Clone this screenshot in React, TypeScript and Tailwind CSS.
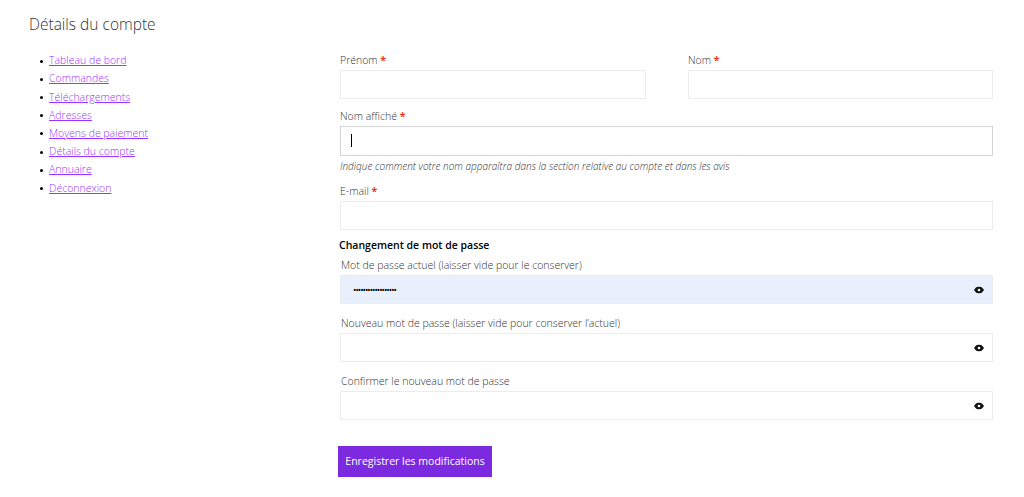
import React from "react";

const Eye = () => (
  <svg width="10" height="7" viewBox="0 0 10 7" className="absolute right-[8px] top-1/2 -translate-y-1/2">
    <path d="M0 3.5C1.5 1 3.2 0 5 0s3.5 1 5 3.5C8.5 6 6.8 7 5 7S1.5 6 0 3.5z" fill="#111" />
    <circle cx="5" cy="3.5" r="1.3" fill="#fff" />
  </svg>
);

const Star = () => <span className="text-[#e2401c] font-bold"> *</span>;

const PwField = ({ label, value, filled }: { label: string; value?: string; filled?: boolean }) => (
  <div>
    <div className="text-[10.5px] text-[#333] font-light h-[20px] leading-[20px] pl-[1px]">{label}</div>
    <div className={`relative h-[29px] border border-[#ececec] mt-[0px] ${filled ? "bg-[#e8f0fe]" : "bg-white"}`}>
      {value && <span className="absolute left-[12px] top-[7px] text-[9px] tracking-[-1px] text-black">{value}</span>}
      <Eye />
    </div>
  </div>
);

export default function App() {
  const links = ["Tableau de bord", "Commandes", "Téléchargements", "Adresses", "Moyens de paiement", "Détails du compte", "Annuaire", "Déconnexion"];
  return (
    <div className="w-[1024px] h-[497px] bg-white text-[#333] overflow-hidden" style={{ fontFamily: '"Open Sans", sans-serif' }}>
      <h1 className="pl-[29px] pt-[13px] text-[15.5px] font-light text-[#333] leading-[22px]">Détails du compte</h1>
      <div className="flex">
        <ul className="w-[340px] pl-[40px] pt-[17px] list-none">
          {links.map((l) => (
            <li key={l} className="flex items-center h-[18.2px] text-[10.5px]">
              <span className="w-[3px] h-[3px] rounded-full bg-black mr-[6px]"></span>
              <a className="underline text-[#a033ff] font-light">{l}</a>
            </li>
          ))}
        </ul>
        <div className="w-[653px] pt-[15px]">
          <div className="flex justify-between">
            <div className="w-[306px]">
              <div className="text-[10.5px] font-light h-[20px] leading-[20px]">Prénom<Star /></div>
              <div className="h-[29px] border border-[#ececec]"></div>
            </div>
            <div className="w-[305px]">
              <div className="text-[10.5px] font-light h-[20px] leading-[20px]">Nom<Star /></div>
              <div className="h-[29px] border border-[#ececec]"></div>
            </div>
          </div>
          <div className="mt-[7px] text-[10.5px] font-light h-[20px] leading-[20px]">Nom affiché<Star /></div>
          <div className="relative h-[30px] border border-[#d4d4d4]">
            <span className="absolute left-[10px] top-[7px] w-[1px] h-[13px] bg-black"></span>
          </div>
          <div className="text-[10px] italic font-light h-[20px] leading-[20px]">Indique comment votre nom apparaîtra dans la section relative au compte et dans les avis</div>
          <div className="mt-[5px] text-[10.5px] font-light h-[20px] leading-[20px]">E-mail<Star /></div>
          <div className="h-[29px] border border-[#ececec]"></div>
          <div className="mt-[7px] text-[10.5px] font-semibold text-black h-[16px] leading-[16px] -ml-[1px]">Changement de mot de passe</div>
          <div className="mt-[2px] flex flex-col gap-[9px]">
            <PwField label="Mot de passe actuel (laisser vide pour le conserver)" value="••••••••••••••••••" filled />
            <PwField label="Nouveau mot de passe (laisser vide pour conserver l’actuel)" />
            <PwField label="Confirmer le nouveau mot de passe" />
          </div>
          <button className="mt-[26px] -ml-[2px] w-[154px] h-[31px] bg-[#7b2ae0] text-white text-[10.5px]">Enregistrer les modifications</button>
        </div>
      </div>
    </div>
  );
}
